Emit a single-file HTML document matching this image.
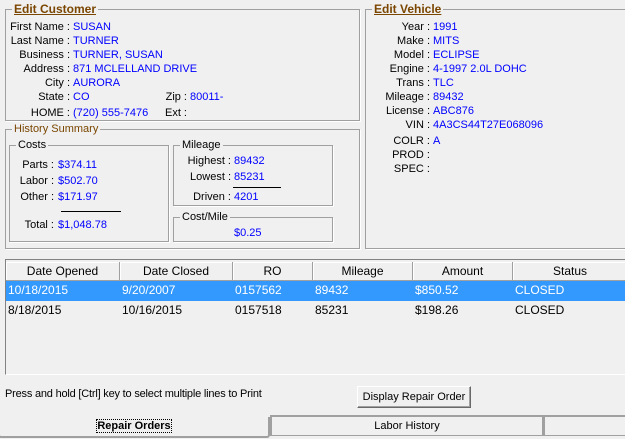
<!DOCTYPE html>
<html><head><meta charset="utf-8"><style>
*{margin:0;padding:0;box-sizing:border-box}
body{width:625px;height:439px;background:#f0f0f0;font-family:"Liberation Sans",Arial,sans-serif;font-size:11px;color:#000;position:relative;overflow:hidden}
div,span{position:absolute;white-space:nowrap}
.g{border:1px solid #a0a0a0;box-shadow:1px 1px 0 #fff}
.t{background:#f0f0f0;padding:0 2px;color:#7a4600;line-height:12px}
.tb{font-weight:bold;text-decoration:underline;font-size:12px}
.tk{color:#000}
.l{text-align:right;line-height:13px}
.v{color:#0000ff;line-height:13px}
.hl{height:1px;background:#000}
.hd{top:262px;height:19px;border-right:1px solid #a0a0a0;border-bottom:1px solid #a0a0a0;box-shadow:inset 1px 1px 0 #fff;text-align:center;line-height:18px;font-size:12px}
.c{line-height:19px;font-size:12px}
</style></head><body>
<div class="g" style="left:5px;top:9px;width:355px;height:112px"></div>
<div class="t tb" style="left:12px;top:3px">Edit Customer</div>
<div class="l" style="left:0;width:70px;top:21px">First Name :</div><div class="v" style="left:73px;top:21px">SUSAN</div>
<div class="l" style="left:0;width:70px;top:35px">Last Name :</div><div class="v" style="left:73px;top:35px">TURNER</div>
<div class="l" style="left:0;width:70px;top:49px">Business :</div><div class="v" style="left:73px;top:49px">TURNER, SUSAN</div>
<div class="l" style="left:0;width:70px;top:63px">Address :</div><div class="v" style="left:73px;top:63px">871 MCLELLAND DRIVE</div>
<div class="l" style="left:0;width:70px;top:77px">City :</div><div class="v" style="left:73px;top:77px">AURORA</div>
<div class="l" style="left:0;width:70px;top:91px">State :</div><div class="v" style="left:73px;top:91px">CO</div>
<div class="l" style="left:0;width:70px;top:107px">HOME :</div><div class="v" style="left:73px;top:107px">(720) 555-7476</div>
<div class="l" style="left:100px;width:87px;top:91px">Zip :</div><div class="v" style="left:190px;top:91px">80011-</div>
<div class="l" style="left:100px;width:87px;top:107px">Ext :</div>
<div class="g" style="left:5px;top:129px;width:355px;height:120px"></div>
<div class="t" style="left:12px;top:123px">History Summary</div>
<div class="g" style="left:9px;top:145px;width:160px;height:97px"></div>
<div class="t tk" style="left:16px;top:139px">Costs</div>
<div class="l" style="left:0;width:54px;top:159px">Parts :</div><div class="v" style="left:58px;top:159px">$374.11</div>
<div class="l" style="left:0;width:54px;top:175px">Labor :</div><div class="v" style="left:58px;top:175px">$502.70</div>
<div class="l" style="left:0;width:54px;top:191px">Other :</div><div class="v" style="left:58px;top:191px">$171.97</div>
<div class="hl" style="left:61px;top:211px;width:60px"></div>
<div class="l" style="left:0;width:54px;top:219px">Total :</div><div class="v" style="left:58px;top:219px">$1,048.78</div>
<div class="g" style="left:173px;top:145px;width:160px;height:61px"></div>
<div class="t tk" style="left:180px;top:139px">Mileage</div>
<div class="l" style="left:170px;width:61px;top:155px">Highest :</div><div class="v" style="left:234px;top:155px">89432</div>
<div class="l" style="left:170px;width:61px;top:171px">Lowest :</div><div class="v" style="left:234px;top:171px">85231</div>
<div class="hl" style="left:233px;top:187px;width:48px"></div>
<div class="l" style="left:170px;width:61px;top:191px">Driven :</div><div class="v" style="left:234px;top:191px">4201</div>
<div class="g" style="left:173px;top:217px;width:160px;height:25px"></div>
<div class="t tk" style="left:180px;top:211px">Cost/Mile</div>
<div class="v" style="left:234px;top:227px">$0.25</div>
<div class="g" style="left:365px;top:9px;width:265px;height:240px"></div>
<div class="t tb" style="left:372px;top:3px">Edit Vehicle</div>
<div class="l" style="left:360px;width:70px;top:21px">Year :</div><div class="v" style="left:433px;top:21px">1991</div>
<div class="l" style="left:360px;width:70px;top:35px">Make :</div><div class="v" style="left:433px;top:35px">MITS</div>
<div class="l" style="left:360px;width:70px;top:49px">Model :</div><div class="v" style="left:433px;top:49px">ECLIPSE</div>
<div class="l" style="left:360px;width:70px;top:63px">Engine :</div><div class="v" style="left:433px;top:63px">4-1997 2.0L DOHC</div>
<div class="l" style="left:360px;width:70px;top:77px">Trans :</div><div class="v" style="left:433px;top:77px">TLC</div>
<div class="l" style="left:360px;width:70px;top:91px">Mileage :</div><div class="v" style="left:433px;top:91px">89432</div>
<div class="l" style="left:360px;width:70px;top:105px">License :</div><div class="v" style="left:433px;top:105px">ABC876</div>
<div class="l" style="left:360px;width:70px;top:119px">VIN :</div><div class="v" style="left:433px;top:119px">4A3CS44T27E068096</div>
<div class="l" style="left:360px;width:70px;top:135px">COLR :</div><div class="v" style="left:433px;top:135px">A</div>
<div class="l" style="left:360px;width:70px;top:149px">PROD :</div>
<div class="l" style="left:360px;width:70px;top:163px">SPEC :</div>
<div style="left:5px;top:259px;width:625px;height:116px;border:1px solid #828282;border-right:none;border-bottom-color:#fff;background:#f0f0f0"></div>
<div class="hd" style="left:6px;width:114px">Date Opened</div>
<div class="hd" style="left:120px;width:113px">Date Closed</div>
<div class="hd" style="left:233px;width:80px">RO</div>
<div class="hd" style="left:313px;width:100px">Mileage</div>
<div class="hd" style="left:413px;width:100px">Amount</div>
<div class="hd" style="left:513px;width:115px">Status</div>
<div style="left:6px;top:281px;width:619px;height:20px;background:#3399ff"></div>
<div class="c" style="left:8px;top:281px;color:#fff">10/18/2015</div>
<div class="c" style="left:122px;top:281px;color:#fff">9/20/2007</div>
<div class="c" style="left:235px;top:281px;color:#fff">0157562</div>
<div class="c" style="left:315px;top:281px;color:#fff">89432</div>
<div class="c" style="left:415px;top:281px;color:#fff">$850.52</div>
<div class="c" style="left:515px;top:281px;color:#fff">CLOSED</div>
<div class="c" style="left:8px;top:301px">8/18/2015</div>
<div class="c" style="left:122px;top:301px">10/16/2015</div>
<div class="c" style="left:235px;top:301px">0157518</div>
<div class="c" style="left:315px;top:301px">85231</div>
<div class="c" style="left:415px;top:301px">$198.26</div>
<div class="c" style="left:515px;top:301px">CLOSED</div>
<div style="left:5px;top:387px;line-height:14px;letter-spacing:-0.2px">Press and hold [Ctrl] key to select multiple lines to Print</div>
<div style="left:357px;top:386px;width:114px;height:22px;border:1px solid #fff;border-right-color:#696969;border-bottom-color:#696969;box-shadow:inset -1px -1px 0 #a0a0a0;text-align:center;line-height:20px">Display Repair Order</div>
<div style="left:-2px;top:417px;width:272px;height:21px;border:2px solid #a0a0a0;border-top:none;border-radius:0 0 3px 3px;text-align:center;line-height:18px;font-weight:bold"><span style="position:static;outline:1px dotted #000">Repair Orders</span></div>
<div style="left:270px;top:415px;width:274px;height:21px;border:2px solid #a0a0a0;border-bottom:1px solid #a0a0a0;text-align:center;line-height:19px;background:#f0f0f0">Labor History</div>
<div style="left:543px;top:415px;width:90px;height:21px;border:2px solid #a0a0a0;border-bottom:1px solid #a0a0a0"></div>
</body></html>
